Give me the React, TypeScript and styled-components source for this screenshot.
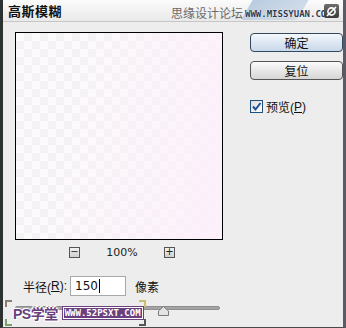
import React from 'react';
import styled, { createGlobalStyle } from 'styled-components';

const GlobalStyle = createGlobalStyle`
  html, body {
    margin: 0;
    padding: 0;
    background: #2c3131;
  }
  * {
    box-sizing: border-box;
  }
`;

const cjk = `"Liberation Sans", "Noto Sans CJK SC", sans-serif`;

const Frame = styled.div`
  position: relative;
  width: 346px;
  height: 328px;
  display: flex;
  flex-direction: column;
  background: #ededed;
  border-left: 3px solid #2c3131;
  border-right: 3px solid #5d5a68;
  border-bottom: 1px solid #4a4a4a;
  font-family: ${cjk};
  color: #111;
  overflow: hidden;
`;

const TitleBar = styled.div`
  position: relative;
  height: 22px;
  flex: none;
  display: flex;
  align-items: center;
  padding: 0 0 0 5px;
  background: linear-gradient(#fbfbfb, #e9e9e9);
  border-bottom: 1px solid #c6c6c6;
`;

const Title = styled.div`
  font-size: 13px;
  font-weight: bold;
  letter-spacing: 0.5px;
  color: #111;
`;

const Watermark = styled.div`
  position: absolute;
  left: 168px;
  top: 0;
  height: 22px;
  display: flex;
  align-items: flex-end;
  padding-bottom: 1px;
`;

const BlueShape = styled.div`
  position: absolute;
  left: 245px;
  top: -4px;
  width: 56px;
  height: 24px;
  background: linear-gradient(160deg, rgba(120, 160, 200, 0.55), rgba(150, 180, 215, 0.25));
  transform: skewX(-30deg);
  border-radius: 3px;
`;

const SiteName = styled.span`
  position: relative;
  font-size: 12px;
  color: #6a6a6a;
  margin-right: 2px;
`;

const SiteUrl = styled.span`
  position: relative;
  font-family: "DejaVu Sans Mono", monospace;
  font-size: 9px;
  font-weight: bold;
  color: #2a3a55;
  text-shadow: 0 0 1px #fff, 0 0 1px #fff;
  letter-spacing: 0;
  white-space: nowrap;
  margin-bottom: 2px;
`;

const CloseBox = styled.div`
  position: absolute;
  right: 4px;
  top: 4px;
  width: 15px;
  height: 14px;
  border-radius: 2px;
  background: linear-gradient(#6c6c6c, #3c3c3c);
  display: flex;
  align-items: center;
  justify-content: center;
`;

const Body = styled.div`
  flex: 1;
  display: flex;
  padding: 10px 0 0 12px;
`;

const LeftCol = styled.div`
  width: 222px;
  display: flex;
  flex-direction: column;
`;

const Preview = styled.div`
  width: 208px;
  height: 208px;
  border: 1px solid #000;
  background:
    linear-gradient(100deg, rgba(255, 255, 255, 0) 20%, rgba(253, 240, 251, 0.85) 90%),
    repeating-conic-gradient(#f4f2f4 0 25%, #fcfbfc 0 50%) 0 0 / 16px 16px;
`;

const ZoomRow = styled.div`
  display: flex;
  align-items: center;
  height: 24px;
  padding-left: 54px;
  font-size: 11px;
  color: #222;
`;

const ZoomBtn = styled.div`
  width: 11px;
  height: 11px;
  border: 1px solid #555;
  background: linear-gradient(#f2f2f2, #cfcfcf);
  display: flex;
  align-items: center;
  justify-content: center;
  font-size: 10px;
  line-height: 1;
  font-family: "DejaVu Sans", sans-serif;
`;

const ZoomText = styled.span`
  width: 84px;
  text-align: center;
  font-family: "DejaVu Sans", sans-serif;
  font-size: 11px;
`;

const RadiusRow = styled.div`
  display: flex;
  align-items: center;
  margin-top: 12px;
  padding-left: 8px;
  font-size: 12px;
  height: 20px;
`;

const Field = styled.div`
  width: 56px;
  height: 20px;
  margin-left: 3px;
  border: 1px solid #a9a9a9;
  background: #fff;
  display: flex;
  align-items: center;
  padding-left: 4px;
  font-family: "DejaVu Sans", sans-serif;
  font-size: 12px;
`;

const Caret = styled.span`
  width: 1px;
  height: 14px;
  background: #000;
  margin-left: 1px;
`;

const Unit = styled.span`
  margin-left: 9px;
`;

const Underlined = styled.span`
  text-decoration: underline;
`;

const SliderWrap = styled.div`
  position: relative;
  height: 14px;
  margin-top: 5px;
  width: 205px;
  display: flex;
  align-items: center;
`;

const Track = styled.div`
  flex: 1;
  height: 4px;
  border-radius: 2px;
  background: #a5a5a5;
  border: 1px solid #8e8e8e;
`;

const Thumb = styled.div`
  position: absolute;
  left: 143px;
  top: 1px;
  width: 11px;
  height: 10px;
`;

const RightCol = styled.div`
  display: flex;
  flex-direction: column;
  padding-left: 14px;
  padding-top: 1px;
`;

const Button = styled.div<{ $primary?: boolean }>`
  width: 93px;
  height: 19px;
  border: 1px solid ${p => (p.$primary ? '#33475e' : '#555')};
  border-radius: 4px;
  background: ${p =>
    p.$primary
      ? 'linear-gradient(#f4f8fc, #dde7f2 50%, #c9d8e9)'
      : 'linear-gradient(#fbfbfb, #e8e8e8 50%, #d6d6d6)'};
  display: flex;
  align-items: center;
  justify-content: center;
  font-size: 12px;
  color: #111;
  margin-bottom: 9px;
`;

const CheckRow = styled.div`
  display: flex;
  align-items: center;
  margin-top: 9px;
  font-size: 12px;
`;

const CheckBox = styled.div`
  width: 13px;
  height: 13px;
  border: 1px solid #1c5180;
  background: linear-gradient(135deg, #dcdcdc, #fff);
  margin-right: 3px;
  display: flex;
  align-items: center;
  justify-content: center;
`;

const Stamp = styled.div`
  position: absolute;
  left: 2px;
  top: 300px;
  width: 141px;
  height: 26px;
  display: flex;
  align-items: center;
  padding-left: 8px;
`;

const StampLogo = styled.span`
  font-size: 14px;
  font-weight: bold;
  color: #6a3f7e;
  text-shadow: 1px 0 #fff, -1px 0 #fff, 0 1px #fff, 0 -1px #fff, 1px 1px #fff, -1px -1px #fff;
  letter-spacing: -0.5px;
`;

const StampUrl = styled.span`
  margin-left: 5px;
  padding: 0 1px;
  height: 12px;
  line-height: 10px;
  background: #6a3f7e;
  border: 1px solid #fff;
  outline: 1px solid #6a3f7e;
  color: #fff;
  font-family: "DejaVu Sans Mono", monospace;
  font-size: 9px;
  font-weight: bold;
  white-space: nowrap;
`;

const Corner = styled.div<{ $color: string; $pos: string }>`
  position: absolute;
  width: 7px;
  height: 7px;
  border: 2px solid ${p => p.$color};
  ${p => p.$pos}
`;

const App = () => (
  <>
    <GlobalStyle />
    <Frame>
      <TitleBar>
        <BlueShape />
        <Title>高斯模糊</Title>
        <Watermark>
          <SiteName>思缘设计论坛</SiteName>
          <SiteUrl>WWW.MISSYUAN.COM</SiteUrl>
        </Watermark>
        <CloseBox>
          <svg width="11" height="11" viewBox="0 0 11 11">
            <circle cx="5.5" cy="5.5" r="3.6" fill="none" stroke="#fff" strokeWidth="1.6" />
            <line x1="1" y1="10" x2="10" y2="1" stroke="#fff" strokeWidth="1.6" />
          </svg>
        </CloseBox>
      </TitleBar>
      <Body>
        <LeftCol>
          <Preview />
          <ZoomRow>
            <ZoomBtn>−</ZoomBtn>
            <ZoomText>100%</ZoomText>
            <ZoomBtn>+</ZoomBtn>
          </ZoomRow>
          <RadiusRow>
            半径(<Underlined>R</Underlined>):
            <Field>
              150
              <Caret />
            </Field>
            <Unit>像素</Unit>
          </RadiusRow>
          <SliderWrap>
            <Track />
            <Thumb>
              <svg width="11" height="10" viewBox="0 0 11 10">
                <path d="M5.5 0.5 L10.5 5 L10.5 9.5 L0.5 9.5 L0.5 5 Z" fill="#e4e4e4" stroke="#7a7a7a" />
              </svg>
            </Thumb>
          </SliderWrap>
        </LeftCol>
        <RightCol>
          <Button $primary>确定</Button>
          <Button>复位</Button>
          <CheckRow>
            <CheckBox>
              <svg width="11" height="11" viewBox="0 0 11 11">
                <path d="M2 5.5 L4.5 8.5 L9.5 2" fill="none" stroke="#1d4f91" strokeWidth="2" />
              </svg>
            </CheckBox>
            预览(<Underlined>P</Underlined>)
          </CheckRow>
        </RightCol>
      </Body>
      <Stamp>
        <Corner $color="#8a8070" $pos="left: 0; top: 0; border-right: none; border-bottom: none;" />
        <Corner $color="#7aa070" $pos="left: 0; bottom: 0; border-right: none; border-top: none;" />
        <Corner $color="#c8c070" $pos="right: 0; top: 0; border-left: none; border-bottom: none;" />
        <Corner $color="#555" $pos="right: 0; bottom: 0; border-left: none; border-top: none;" />
        <StampLogo>PS学堂</StampLogo>
        <StampUrl>WWW.52PSXT.COM</StampUrl>
      </Stamp>
    </Frame>
  </>
);

export default App;
